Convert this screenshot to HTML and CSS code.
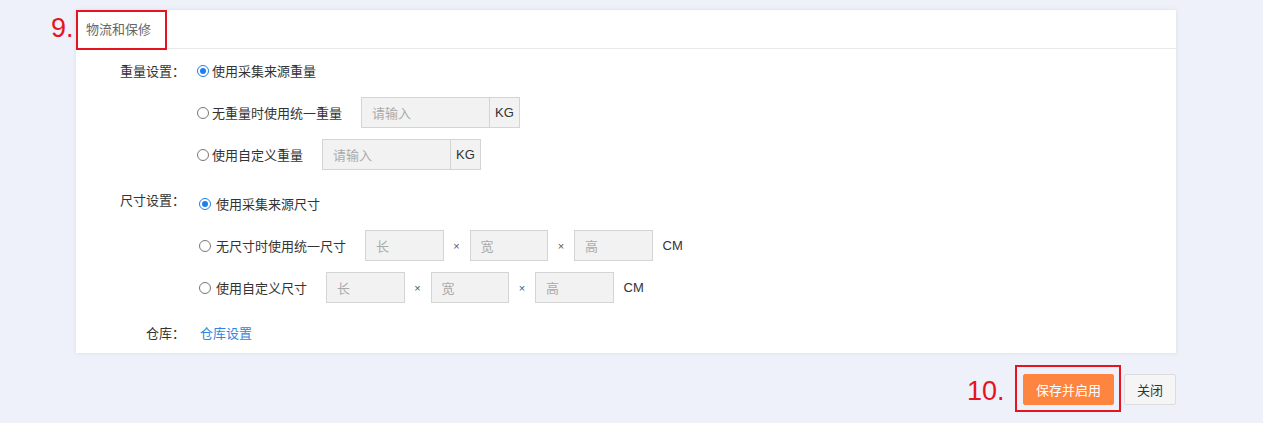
FILE: index.html
```html
<!DOCTYPE html>
<html lang="zh-CN">
<head>
<meta charset="utf-8">
<title>物流和保修</title>
<link rel="stylesheet" href="styles.css">
</head>
<body>
<div class="page">
  <section class="card">
    <header class="card-head">
      <span class="title">物流和保修</span>
      <span class="anno anno-9">9.</span>
      <span class="anno-box anno-box-9"></span>
    </header>
    <div class="card-body">
      <div class="form-item group">
        <div class="label">重量设置：</div>
        <div class="options">
          <div class="opt first"><span class="radio checked"></span><span class="opt-text">使用采集来源重量</span></div>
          <div class="opt">
            <span class="radio"></span><span class="opt-text">无重量时使用统一重量</span>
            <span class="input-group"><span class="input wide">请输入</span><span class="addon">KG</span></span>
          </div>
          <div class="opt">
            <span class="radio"></span><span class="opt-text">使用自定义重量</span>
            <span class="input-group"><span class="input wide">请输入</span><span class="addon">KG</span></span>
          </div>
        </div>
      </div>
      <div class="form-item group dim">
        <div class="label">尺寸设置：</div>
        <div class="options">
          <div class="opt first"><span class="radio checked"></span><span class="opt-text">使用采集来源尺寸</span></div>
          <div class="opt">
            <span class="radio"></span><span class="opt-text">无尺寸时使用统一尺寸</span>
            <span class="dims">
              <span class="input short">长</span><span class="times">×</span>
              <span class="input short">宽</span><span class="times">×</span>
              <span class="input short">高</span><span class="unit">CM</span>
            </span>
          </div>
          <div class="opt">
            <span class="radio"></span><span class="opt-text">使用自定义尺寸</span>
            <span class="dims">
              <span class="input short">长</span><span class="times">×</span>
              <span class="input short">宽</span><span class="times">×</span>
              <span class="input short">高</span><span class="unit">CM</span>
            </span>
          </div>
        </div>
      </div>
      <div class="form-item warehouse">
        <div class="label">仓库：</div>
        <div class="options">
          <div class="opt first"><a class="link" href="#">仓库设置</a></div>
        </div>
      </div>
    </div>
  </section>
  <footer class="actions">
    <div class="primary-wrap">
      <span class="anno anno-10">10.</span>
      <span class="anno-box anno-box-10"></span>
      <button class="btn btn-primary" type="button">保存并启用</button>
    </div>
    <button class="btn btn-default" type="button">关闭</button>
  </footer>
</div>
</body>
</html>
```

FILE: styles.css
```css
* { box-sizing: border-box; }
html, body { margin: 0; padding: 0; }
body {
  background: #eef1f9;
  font-family: "Noto Sans CJK SC", "Liberation Sans", sans-serif;
  font-size: 13px;
  color: #333;
}
.page {
  width: 1100px;
  margin-left: 76px;
  padding-top: 10px;
  padding-bottom: 18px;
}
.card {
  background: #fff;
  box-shadow: 0 0 4px rgba(60, 70, 100, 0.12);
}
.card-head {
  position: relative;
  height: 39px;
  border-bottom: 1px solid #e8e8e8;
  padding-left: 10px;
  line-height: 38px;
}
.title { color: #666; font-size: 13px; }
.anno {
  position: absolute;
  font-family: "Liberation Sans", Arial, sans-serif;
  color: #e5141e;
  font-size: 27px;
  line-height: 27px;
}
.anno-9 { left: -25px; top: 5px; }
.anno-box {
  position: absolute;
  border: 2px solid #e5141e;
}
.anno-box-9 { left: 0; top: 0; width: 91px; height: 40px; }

.card-body { padding: 6px 0 5px; }
.form-item { display: flex; }
.form-item.group { margin-bottom: 18px; }
.form-item.dim { margin-bottom: 14px; }
.label {
  width: 109px;
  text-align: right;
  line-height: 31px;
  flex: none;
}
.options {
  padding-left: 12px;
  display: flex;
  flex-direction: column;
  gap: 11px;
}
.dim .options { padding-left: 14px; }
.dim .label { line-height: 24px; }
.warehouse .options { padding-left: 15px; }
.opt {
  display: flex;
  align-items: center;
  height: 31px;
}
.radio {
  width: 12px;
  height: 12px;
  border: 1px solid #777;
  border-radius: 50%;
  background: #fff;
  margin-right: 3px;
  flex: none;
  position: relative;
}
.dim .radio { margin-right: 5px; }
.radio.checked { border-color: #1d7fea; }
.radio.checked::after {
  content: "";
  position: absolute;
  left: 2px; top: 2px;
  width: 6px; height: 6px;
  border-radius: 50%;
  background: #1d7fea;
}
.opt-text { white-space: nowrap; }
.input-group { display: flex; margin-left: 19px; }
.input {
  height: 31px;
  border: 1px solid #d4d4d4;
  background: #f2f2f2;
  color: #aaa;
  line-height: 29px;
  padding-left: 10px;
}
.input.wide { width: 129px; }
.addon {
  width: 30px;
  height: 31px;
  border: 1px solid #d4d4d4;
  border-left: none;
  background: #f2f2f2;
  text-align: center;
  line-height: 29px;
  font-family: "Liberation Sans", Arial, sans-serif;
  font-size: 13px;
  color: #333;
}
.dims { display: flex; align-items: center; margin-left: 19px; }
.input.short { width: 78.5px; }
.times {
  width: 26px;
  text-align: center;
  font-family: "Liberation Sans", Arial, sans-serif;
  font-size: 11px;
  color: #4a5a70;
}
.unit {
  margin-left: 10px;
  font-family: "Liberation Sans", Arial, sans-serif;
  font-size: 13px;
  color: #333;
}
.link { color: #2f86df; text-decoration: none; }

.actions {
  display: flex;
  justify-content: flex-end;
  gap: 10px;
  margin-top: 21px;
}
.primary-wrap { position: relative; }
.anno-box-10 { left: -8px; top: -9px; width: 106px; height: 47px; }
.anno-10 { left: -56px; top: 4px; }
.btn {
  display: block;
  height: 31px;
  font-family: "Noto Sans CJK SC", sans-serif;
  font-size: 13px;
  border-radius: 2px;
  padding: 0;
  cursor: pointer;
}
.btn-primary {
  width: 91px;
  background: #fe8540;
  border: 1px solid #fe8540;
  color: #fff;
}
.btn-default {
  width: 52px;
  background: #f5f5f5;
  border: 1px solid #dcdcdc;
  color: #333;
}
```
